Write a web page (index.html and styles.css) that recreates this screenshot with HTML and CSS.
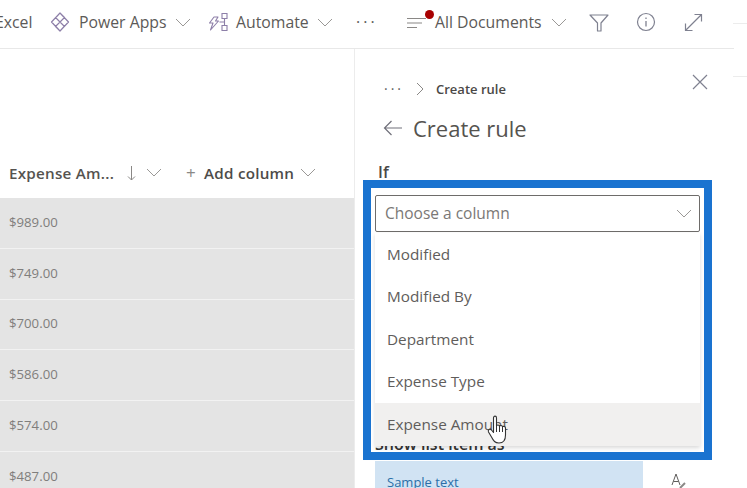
FILE: index.html
```html
<!DOCTYPE html>
<html lang="en">
<head>
<meta charset="utf-8">
<title>Create rule</title>
<link rel="stylesheet" href="styles.css">
</head>
<body>
<div class="page">
  <header class="toolbar">
    <span class="tool excel">Excel</span>
    <span class="tool power">
      <svg class="ic" width="20" height="20" viewBox="0 0 20 20"><path d="M10 1 L18.500 10 L10 19 L1.500 10 Z M10 1 L14.500 5.500 L5.500 14.500 L10 19 M5.500 5.500 L14.500 14.500" fill="none" stroke="#8d7fa8" stroke-width="1.200" stroke-linejoin="round"/></svg>
      Power Apps
      <svg class="chev" width="16" height="9" viewBox="0 0 16 9"><path d="M1 1 L8 8 L15 1" fill="none" stroke="#9a9896" stroke-width="1"/></svg>
    </span>
    <span class="tool auto">
      <svg class="ic" width="21" height="20" viewBox="0 0 21 20"><path d="M6 5 L10 5 L7.500 9 L10.500 9 L2.500 18 L5 11 L1.500 11 Z" fill="none" stroke="#8d7fa8" stroke-width="1.100" stroke-linejoin="round"/><path d="M14 1.500 H19 V6.500 H14 Z M14 13.500 H19 V18.500 H14 Z M16.500 6.500 V13.500 M11.500 10 H16.500" fill="none" stroke="#8d7fa8" stroke-width="1.100"/></svg>
      Automate
      <svg class="chev" width="16" height="9" viewBox="0 0 16 9"><path d="M1 1 L8 8 L15 1" fill="none" stroke="#9a9896" stroke-width="1"/></svg>
    </span>
    <span class="tool dots">···</span>
    <span class="tool views">
      <span class="viewicon">
        <svg width="20" height="12" viewBox="0 0 20 12"><path d="M0 1.500 H19 M0 6 H15 M0 10.500 H10" fill="none" stroke="#8a8886" stroke-width="1.100"/></svg>
        <i class="dot"></i>
      </span>
      All Documents
      <svg class="chev" width="16" height="9" viewBox="0 0 16 9"><path d="M1 1 L8 8 L15 1" fill="none" stroke="#9a9896" stroke-width="1"/></svg>
    </span>
    <svg class="filter" width="20" height="18" viewBox="0 0 20 18"><path d="M1 1 H19 L12 9 V17 H8.500 V9 Z" fill="none" stroke="#7f8190" stroke-width="1.200" stroke-linejoin="round"/></svg>
    <svg class="info" width="20" height="20" viewBox="0 0 20 20"><circle cx="10" cy="10" r="8.500" fill="none" stroke="#7f8190" stroke-width="1.200"/><path d="M10 9 V14.500 M10 5.500 V7" stroke="#7f8190" stroke-width="1.300"/></svg>
    <svg class="expand" width="19" height="19" viewBox="0 0 19 19"><path d="M1.500 17.500 L17.500 1.500 M10.500 1.500 H17.500 V8.500 M1.500 10.500 V17.500 H8.500" fill="none" stroke="#7f8190" stroke-width="1.200"/></svg>
  </header>
  <main class="main">
    <section class="list">
      <div class="head">
        <span class="colname">Expense Am...</span>
        <svg class="arrow" width="9" height="15" viewBox="0 0 9 15"><path d="M4.500 0 V14 M1 10.500 L4.500 14 L8 10.500" fill="none" stroke="#8a8886" stroke-width="1"/></svg>
        <svg class="chev" width="16" height="9" viewBox="0 0 16 9"><path d="M1 1 L8 8 L15 1" fill="none" stroke="#9a9896" stroke-width="1"/></svg>
        <span class="plus">+</span>
        <span class="addcol">Add column</span>
        <svg class="chev" width="16" height="9" viewBox="0 0 16 9"><path d="M1 1 L8 8 L15 1" fill="none" stroke="#9a9896" stroke-width="1"/></svg>
      </div>
      <div class="row">$989.00</div>
      <div class="row">$749.00</div>
      <div class="row">$700.00</div>
      <div class="row">$586.00</div>
      <div class="row">$574.00</div>
      <div class="row">$487.00</div>
    </section>
    <aside class="panel">
      <div class="crumbs">
        <span class="cdots">···</span>
        <svg width="8" height="14" viewBox="0 0 8 14"><path d="M1 1 L7 7 L1 13" fill="none" stroke="#8a8886" stroke-width="1"/></svg>
        <span class="ctext">Create rule</span>
        <svg class="close" width="16" height="16" viewBox="0 0 16 16"><path d="M1 1 L15 15 M15 1 L1 15" stroke="#7f8190" stroke-width="1.200"/></svg>
      </div>
      <div class="title">
        <svg width="20" height="16" viewBox="0 0 20 16"><path d="M19 8 H1.500 M8.500 1 L1.500 8 L8.500 15" fill="none" stroke="#70707a" stroke-width="1.200"/></svg>
        <h1>Create rule</h1>
      </div>
      <div class="iflabel">If</div>
      <div class="spacer"></div>
      <div class="showas">Show list item as</div>
      <div class="sample">
        <div class="samplebox">Sample text</div>
        <svg class="fmt" width="15" height="16" viewBox="0 0 15 16"><path d="M1 12 L5 1 L9 12 M2.500 8.500 H7.500" fill="none" stroke="#605e5c" stroke-width="1"/><path d="M9 15 L14 10" stroke="#8a8886" stroke-width="2"/></svg>
      </div>
    </aside>
  </main>
  <i class="tick tick-top"></i>
  <i class="tick tick-panel"></i>
  <div class="callout">
    <div class="select">
      <span>Choose a column</span>
      <svg class="chev" width="16" height="9" viewBox="0 0 16 9"><path d="M1 1 L8 8 L15 1" fill="none" stroke="#9a9896" stroke-width="1"/></svg>
    </div>
    <ul class="menu">
      <li>Modified</li>
      <li>Modified By</li>
      <li>Department</li>
      <li>Expense Type</li>
      <li class="hover">Expense Amount</li>
    </ul>
    <svg class="hand" width="22" height="29" viewBox="0 0 22 29"><path d="M6.500 15 V3 C6.500 0.500 9.500 0.500 9.500 3 V11 C9.500 9.500 12.500 9.500 12.500 11.500 C12.500 10 15.500 10 15.500 12 C15.500 11 18.500 11 18.500 13 V20 C18.500 25 16 28 12 28 C8 28 6.500 26 4.500 22 L1.500 17 C0.500 14.500 3 13.500 4.500 15 L6.500 17.500 Z" fill="#fff" stroke="#333" stroke-width="1.100" stroke-linejoin="round"/><path d="M9.500 11 V17 M12.500 11.500 V17 M15.500 12 V17" stroke="#333" stroke-width="1"/></svg>
  </div>
</div>
</body>
</html>
```
FILE: styles.css
```css
* { box-sizing: border-box; }
html, body { margin: 0; padding: 0; }
body { font-family: "Open Sans", "Noto Sans", sans-serif; color: #323130; background: #fff; }
.page { position: relative; width: 747px; height: 488px; overflow: hidden; }

.toolbar { display: flex; align-items: center; height: 49px; border-bottom: 1px solid #e8e8e8; margin-right: 13px; font-size: 15.800px; color: #5c5a58; white-space: nowrap; padding-bottom: 4px; }
.tool { display: inline-flex; align-items: center; flex: none; }
.excel { margin-left: -5px; width: 55px; }
.power { width: 158px; }
.power .ic { margin-right: 9px; }
.power .chev { margin-left: 8px; }
.auto { width: 148px; }
.auto .ic { margin-right: 7px; }
.auto .chev { margin-left: 8px; }
.dots { width: 51px; font-size: 16px; letter-spacing: 3px; color: #605e5c; }
.views { width: 182px; color: #5c5a58; }
.viewicon { position: relative; display: inline-flex; width: 28px; height: 14px; align-items: flex-end; }
.dot { position: absolute; left: 18px; top: -5px; width: 9px; height: 9px; border-radius: 50%; background: #a80000; }
.views .chev { margin-left: 9px; }
.filter { margin-top: 2px; flex: none; }
.info { margin-left: 27px; flex: none; }
.expand { margin-left: 28px; flex: none; }

.main { display: flex; height: 439px; }
.list { width: 355px; border-right: 1px solid #ececec; flex: none; }
.head { display: flex; align-items: center; height: 149px; padding: 98px 0 0 9px; font-size: 15.200px; letter-spacing: .25px; font-weight: 600; color: #55534f; white-space: nowrap; }
.arrow { margin-left: 13px; margin-top: 1px; }
.head .arrow + .chev { margin-left: 10px; }
.plus { margin-left: 24px; font-weight: 400; font-size: 17px; color: #8a8886; margin-right: 8px; }
.addcol { color: #4d4b49; }
.addcol + .chev { margin-left: 6px; }
.row { display: flex; align-items: center; height: 50.800px; background: #e4e4e4; border-bottom: 1.500px solid #f2f2f2; padding: 0 0 2px 9px; font-size: 13.200px; color: #807e7c; }

.panel { flex: 1; padding: 24px 0 0 20px; min-width: 0; }
.crumbs { display: flex; align-items: center; height: 32px; font-size: 13px; position: relative; padding-left: 9px; }
.cdots { width: 32px; font-size: 14px; letter-spacing: 3px; color: #605e5c; line-height: 1; }
.ctext { margin-left: 12px; font-weight: 600; color: #4a4846; }
.close { position: absolute; left: 317px; top: 1px; }
.title { display: flex; align-items: center; height: 40px; padding-left: 8px; margin-top: 3px; }
.title h1 { margin: 0 0 0 10px; font-size: 22px; font-weight: 400; color: #55534f; }
.iflabel { font-size: 16px; font-weight: 600; color: #4a4846; margin-top: 13px; padding-left: 3px; line-height: 22px; }
.spacer { height: 250px; }
.showas { font-size: 16px; font-weight: 600; color: #333; line-height: 22px; white-space: nowrap; }
.sample { display: flex; align-items: flex-start; margin-top: 6px; }
.samplebox { width: 268px; height: 60px; padding: 12px 0 0 12px; background: #d1e3f3; color: #2a6fa8; font-size: 13px; }
.fmt { margin-left: 28px; margin-top: 12px; }

.tick { position: absolute; left: 733px; width: 14px; height: 1px; background: #ececec; }
.tick-top { top: 23px; }
.tick-panel { top: 76px; }

.callout { position: absolute; left: 363px; top: 180px; width: 349px; height: 280px; border: 8px solid #1a73d0; padding: 7px 4px 0; }
.select { display: flex; align-items: center; justify-content: space-between; width: 325px; height: 37px; border: 1px solid #6e6c6a; border-radius: 2px; padding: 0 7px 1px 9px; font-size: 15.500px; color: #7a7876; background: #fff; }
.menu { list-style: none; margin: 0; padding: 0; width: 325px; background: #fff; box-shadow: 0 2px 4px rgba(0,0,0,.15); }
.menu li { display: flex; align-items: center; height: 42.500px; padding: 0 0 1px 12px; font-size: 15.300px; color: #5f5d5b; }
.menu li:first-child { margin-top: 1px; }
.menu .hover { background: #f1f0ef; }
.hand { position: absolute; left: 116px; top: 227px; }
```
